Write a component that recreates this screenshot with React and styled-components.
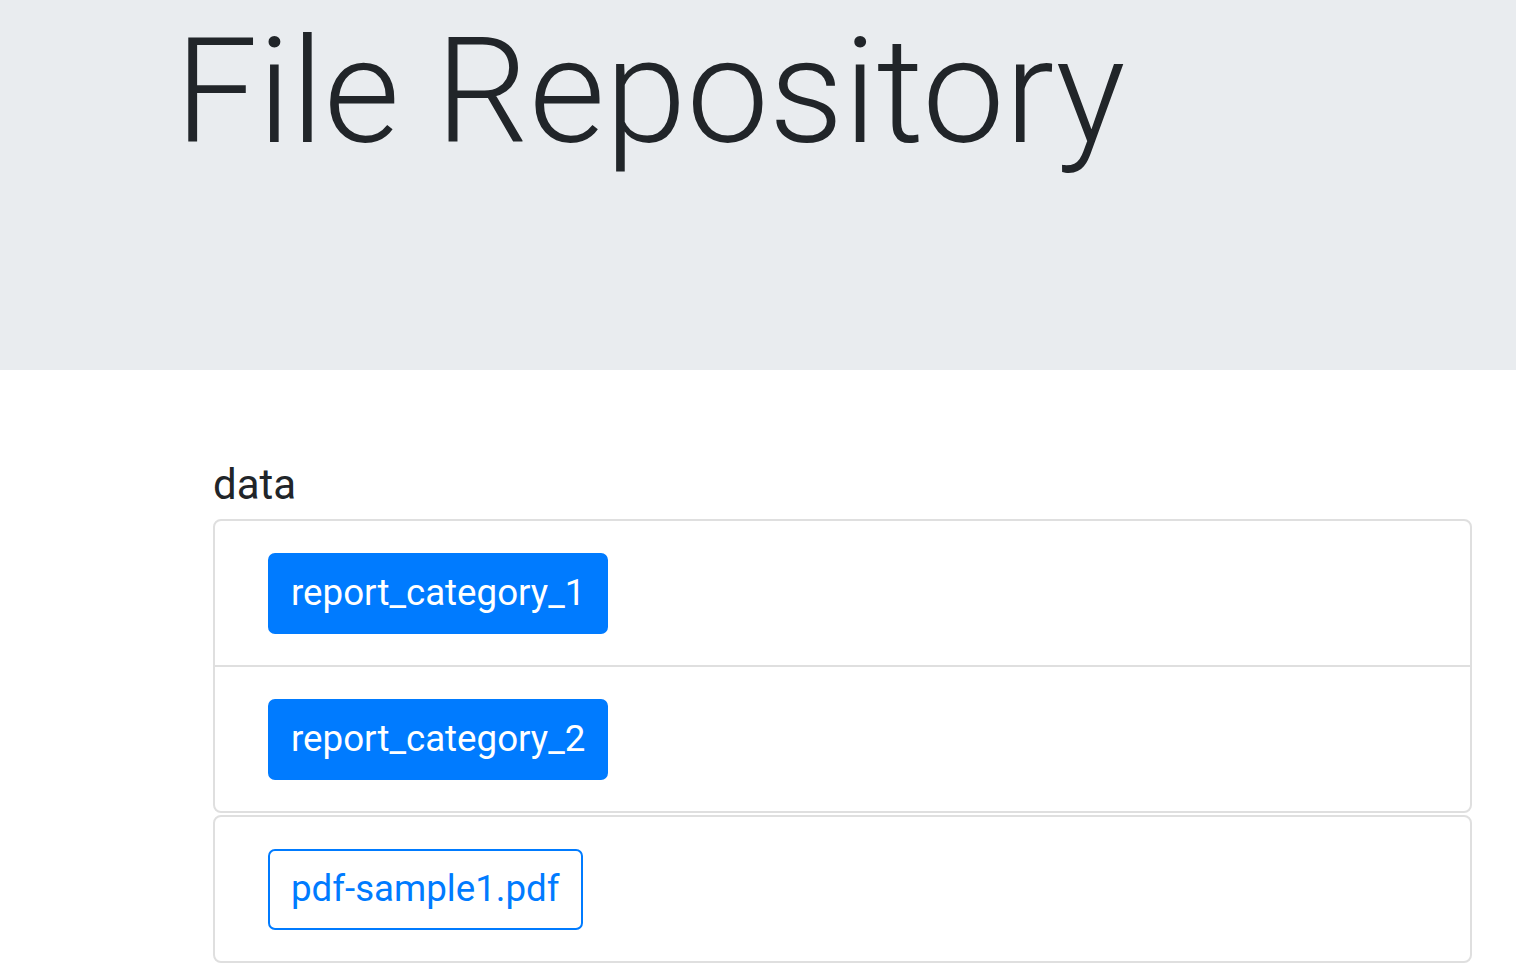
import styled, { createGlobalStyle } from "styled-components";

const GlobalStyle = createGlobalStyle`
  html, body {
    margin: 0;
    padding: 0;
    background: #fff;
    font-family: Roboto, "Liberation Sans", sans-serif;
    color: #212529;
  }
`;

const Jumbotron = styled.header`
  background-color: #e9ecef;
  height: 370px;
  box-sizing: border-box;
  padding: 4px 0 0 175px;
`;

const Title = styled.h1`
  margin: 0;
  font-size: 147px;
  font-weight: 300;
  line-height: 1.2;
`;

const Main = styled.main`
  padding: 90px 44px 0 213px;
`;

const FolderName = styled.h4`
  margin: 0 0 9px;
  font-size: 42px;
  font-weight: 400;
  line-height: 50px;
`;

const Card = styled.ul`
  list-style: none;
  margin: 0 0 2px;
  padding: 0;
  border: 2px solid #dfdfdf;
  border-radius: 8px;
  background: #fff;
`;

const Item = styled.li`
  padding: 32px 53px 31px;
  & + & {
    border-top: 2px solid #dfdfdf;
  }
`;

const FileButton = styled.a`
  display: inline-flex;
  align-items: center;
  box-sizing: border-box;
  height: 81px;
  padding: 0 21px;
  font-size: 36.7px;
  font-weight: 400;
  line-height: 1;
  border-radius: 7px;
  border: 2px solid #007bff;
  text-decoration: none;
  cursor: pointer;
  color: ${(p) => (p.outline ? "#007bff" : "#fff")};
  background: ${(p) => (p.outline ? "#fff" : "#007bff")};
`;

const folders = ["report_category_1", "report_category_2"];
const files = ["pdf-sample1.pdf"];

export default function App() {
  return (
    <>
      <GlobalStyle />
      <Jumbotron>
        <Title>File Repository</Title>
      </Jumbotron>
      <Main>
        <FolderName>data</FolderName>
        <Card>
          {folders.map((f) => (
            <Item key={f}>
              <FileButton href="#">{f}</FileButton>
            </Item>
          ))}
        </Card>
        <Card>
          {files.map((f) => (
            <Item key={f}>
              <FileButton outline href="#">
                {f}
              </FileButton>
            </Item>
          ))}
        </Card>
      </Main>
    </>
  );
}
